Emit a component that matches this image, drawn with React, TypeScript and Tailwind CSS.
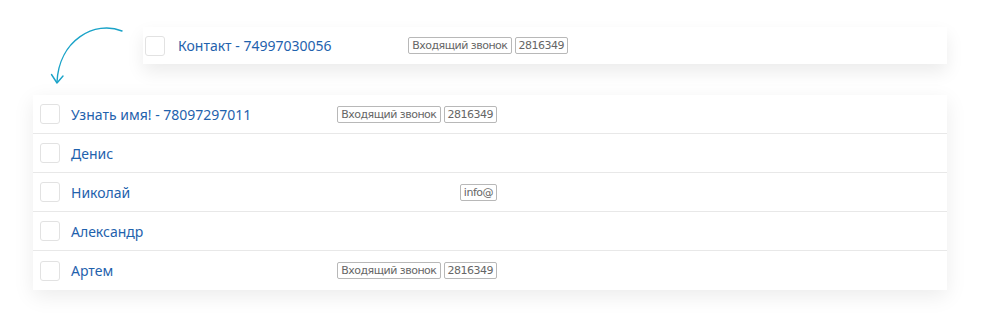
import React from 'react';

type Row = { name: string; tags: string[] };

const rows: Row[] = [
  { name: 'Узнать имя! - 78097297011', tags: ['Входящий звонок', '2816349'] },
  { name: 'Денис', tags: [] },
  { name: 'Николай', tags: ['info@'] },
  { name: 'Александр', tags: [] },
  { name: 'Артем', tags: ['Входящий звонок', '2816349'] },
];

const Checkbox = () => (
  <span className="block w-5 h-5 shrink-0 rounded-[3px] border border-[#e2e2e2] bg-white" />
);

const Tags = ({ tags }: { tags: string[] }) => (
  <div className="flex gap-[3px]">
    {tags.map((t, i) => (
      <span
        key={i}
        className="h-[17px] px-[3px] flex items-center rounded-[2px] border border-[#b8b8b8] text-[11px] leading-none tracking-[-0.5px] text-[#666] font-['DejaVu_Sans',sans-serif]"
      >
        {t}
      </span>
    ))}
  </div>
);

const Arrow = () => (
  <svg width="110" height="68" viewBox="0 0 110 68" className="shrink-0 overflow-visible" fill="none">
    <path d="M89 4 C 62 -7, 26 13, 24 55" stroke="#1aa3c8" strokeWidth="1.4" strokeLinecap="round" />
    <path d="M18.5 47.5 L24 56 L30 49" stroke="#1aa3c8" strokeWidth="1.4" strokeLinecap="round" strokeLinejoin="round" />
  </svg>
);

export default function App() {
  return (
    <div className="w-[1000px] h-[327px] bg-white pt-[27px] pl-[33px] font-['Noto_Sans',sans-serif]">
      <div className="flex items-start">
        <Arrow />
        <div className="w-[804px] h-[37px] bg-white flex items-center pl-[2px] gap-[13px] shadow-[0_8px_18px_rgba(0,0,0,0.08)]">
          <Checkbox />
          <div className="w-[390px] flex items-center justify-between">
            <span className="text-[14px] text-[#1f62ad]">Контакт - 74997030056</span>
            <Tags tags={['Входящий звонок', '2816349']} />
          </div>
        </div>
      </div>
      <div className="w-[914px] bg-white shadow-[0_6px_20px_rgba(0,0,0,0.08)]">
        {rows.map((r, i) => (
          <div
            key={i}
            className={`h-[39px] flex items-center pl-[7px] gap-[11px] ${i < rows.length - 1 ? 'border-b border-[#e8e8e8]' : ''}`}
          >
            <Checkbox />
            <div className="w-[426px] flex items-center justify-between">
              <span className="text-[14px] text-[#1f62ad]">{r.name}</span>
              <Tags tags={r.tags} />
            </div>
          </div>
        ))}
      </div>
    </div>
  );
}
